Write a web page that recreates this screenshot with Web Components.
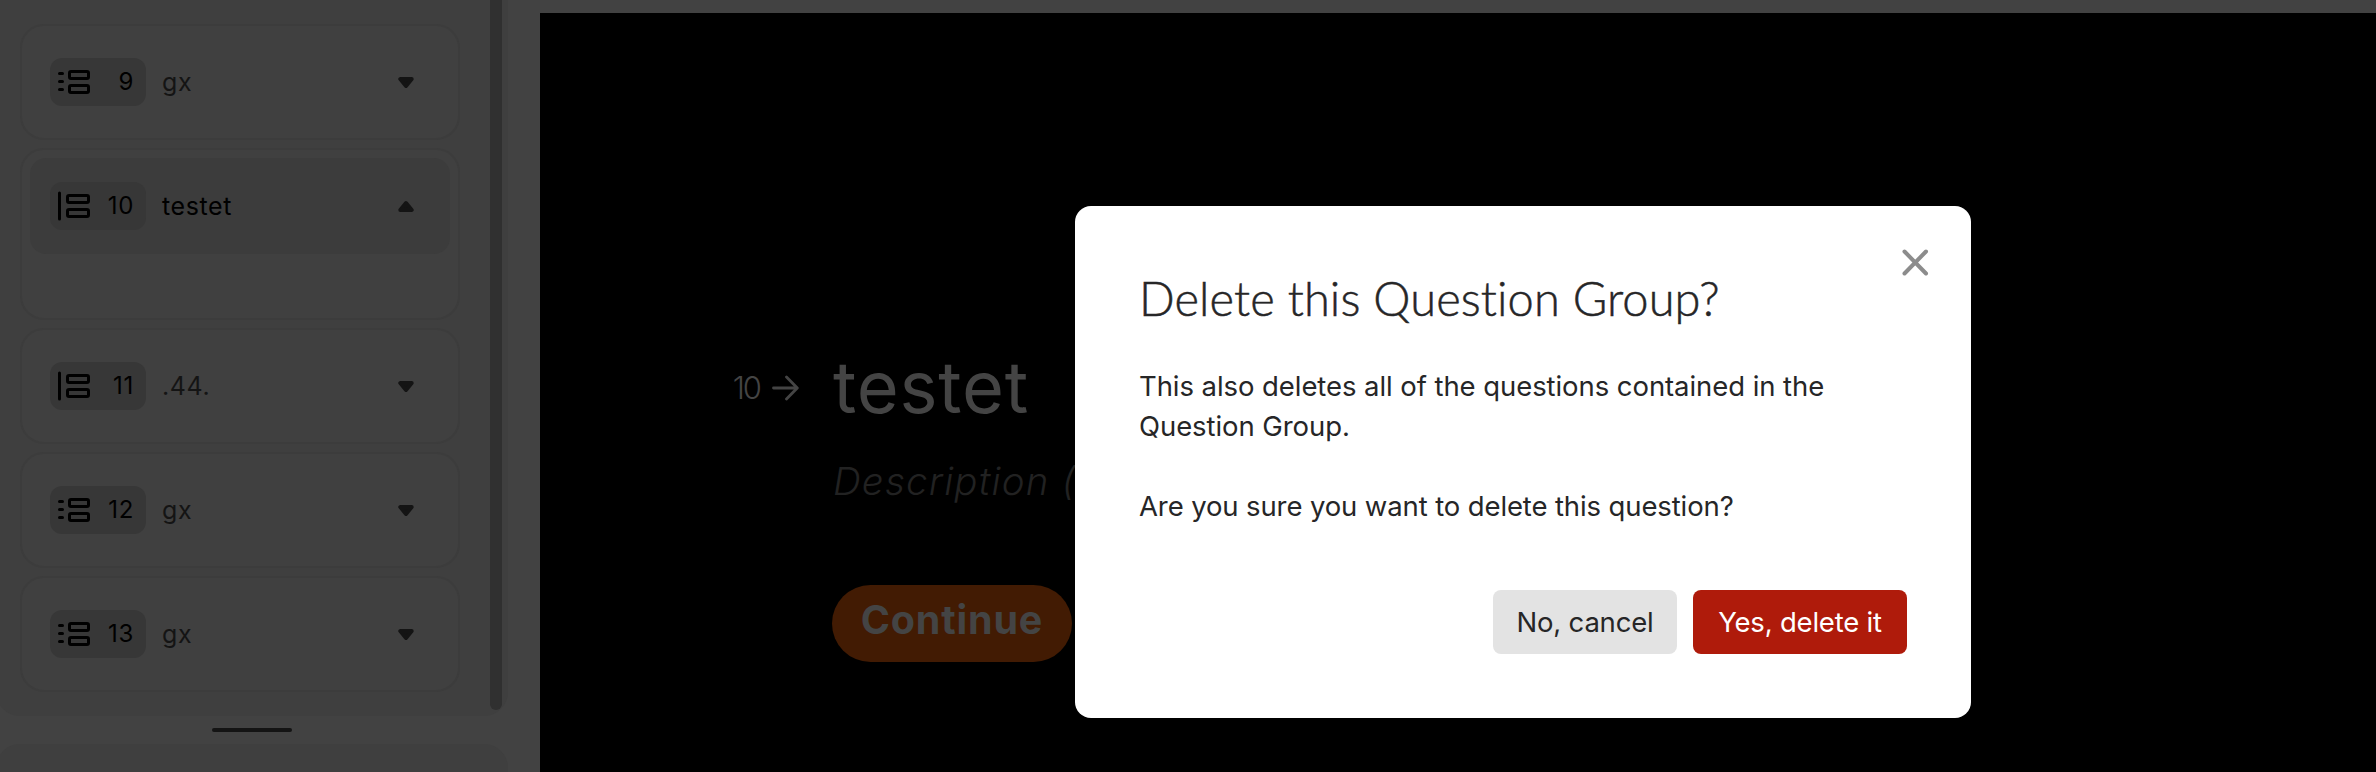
<!DOCTYPE html>
<html lang="en">
<head>
<meta charset="utf-8">
<title>Form editor</title>
<style>
html,body{margin:0;height:100%;overflow:hidden;background:#424242}
body{font-family:Inter,"Liberation Sans",sans-serif}
</style>
</head>
<body>
<form-editor>
  <question-panel slot="side">
    <question-card number="9" kind="dots">gx</question-card>
    <question-card number="10" kind="bar" open>testet</question-card>
    <question-card number="11" kind="bar">.44.</question-card>
    <question-card number="12" kind="dots">gx</question-card>
    <question-card number="13" kind="dots">gx</question-card>
  </question-panel>
  <question-preview slot="main" number="10">
    testet
    <span slot="description">Description (optional)</span>
    <span slot="action">Continue</span>
  </question-preview>
</form-editor>
<confirm-dialog>
  <span slot="title">Delete this Question Group?</span>
  <span slot="body">This also deletes all of the questions contained in the<br>Question Group.</span>
  <span slot="confirm">Are you sure you want to delete this question?</span>
  <dialog-button slot="actions" style="--w:184px;--fg:#262627;--bg:#e3e3e3">No, cancel</dialog-button>
  <dialog-button slot="actions" style="--w:214px;--fg:#fff;--bg:#af1b0b">Yes, delete it</dialog-button>
</confirm-dialog>
<script>
const define = (name, html, init) => customElements.define(name, class extends HTMLElement {
  constructor() {
    super();
    this.attachShadow({mode: 'open'}).innerHTML = html;
  }
  connectedCallback() { if (init) init(this, this.shadowRoot); }
});

define('form-editor', `
<style>
:host{display:grid;grid-template-columns:540px 1fr;height:772px;overflow:hidden}
.main{margin-top:13px;background:#000}
</style>
<slot name="side"></slot><div class="main"><slot name="main"></slot></div>`);

define('question-panel', `
<style>
:host{display:flex;flex-direction:column;height:772px;overflow:hidden}
.list{box-sizing:border-box;width:512px;height:716px;flex:none;margin-left:-4px;padding:24px 6px 0 24px;display:flex;justify-content:space-between;background:#3f3f3f;border-radius:0 0 24px 24px}
.cards{display:flex;flex-direction:column;gap:8px;width:440px}
.scroll{width:12px;height:710px;margin-top:-24px;border-radius:0 0 6px 6px;background:#303030}
.handle{flex:none;width:80px;height:4px;margin:12px 0 12px 212px;border-radius:2px;background:#141414}
.next{flex:none;width:512px;height:60px;margin-left:-4px;border-radius:24px 24px 0 0;background:#3f3f3f}
</style>
<div class="list"><div class="cards"><slot></slot></div><div class="scroll"></div></div>
<div class="handle"></div><div class="next"></div>`);

const icons = {
  dots: `<g stroke-linecap="round" stroke-width="3"><path d="M5.5 15.5h3M5.5 23.5h3M5.5 31.5h3"/></g><rect x="15.5" y="13.5" width="19" height="7" rx="1.5"/><rect x="15.5" y="27.5" width="19" height="7" rx="1.5"/>`,
  bar: `<path d="M5.5 11v26" stroke-linecap="round"/><rect x="13.5" y="13.5" width="21" height="7" rx="1.5"/><rect x="13.5" y="27.5" width="21" height="7" rx="1.5"/>`
};
define('question-card', `
<style>
:host{display:block;box-sizing:border-box;height:116px;border:2px solid #3c3c3c;border-radius:24px;background:#404040;padding:8px;color:#141414}
:host([open]){height:172px;color:#000}
.head{box-sizing:border-box;height:96px;border-radius:16px;padding:0 36px 0 20px;display:flex;align-items:center}
:host([open]) .head{background:#3c3c3c}
.badge{box-sizing:border-box;width:96px;height:48px;border-radius:12px;background:#373737;color:#000;display:flex;align-items:center;justify-content:space-between;padding:0 12px 0 4px;font-size:24px;line-height:30px;letter-spacing:.7px;font-weight:400}
.badge svg{fill:none;stroke:#000;stroke-width:3}
.label{flex:1;margin-left:16px;font-size:25px;line-height:30px;letter-spacing:.6px}
.caret{fill:#141414;stroke:#141414;stroke-width:4;stroke-linejoin:round}
:host([open]) .caret{transform:rotate(180deg)}
</style>
<div class="head">
<div class="badge"><svg width="40" height="48" viewBox="0 0 40 48"></svg><span class="n"></span></div>
<div class="label"><slot></slot></div>
<svg class="caret" width="16" height="13" viewBox="0 0 16 13"><path d="M2.3 3H13.7L8 10z"/></svg>
</div>`, (el, root) => {
  root.querySelector('.badge svg').innerHTML = icons[el.getAttribute('kind')];
  root.querySelector('.n').textContent = el.getAttribute('number');
});

define('question-preview', `
<style>
:host{display:grid;grid-template-columns:292px 1fr;color:#444;padding-top:332px;white-space:nowrap}
.num{display:flex;justify-content:flex-end;align-items:center;height:62px;padding:12px 33px 0 0;font-size:31px;line-height:36px}
.num span{letter-spacing:-2px;margin-right:12px;font-weight:300}
.num svg{fill:none;stroke:#444;stroke-width:2.8;stroke-linecap:round;stroke-linejoin:round}
.q{font-size:72px;line-height:84px;letter-spacing:.8px;padding-left:1px}
.d{font-style:italic;font-weight:300;font-size:38.5px;line-height:56px;letter-spacing:1.2px;margin-top:24px;color:#222;padding-left:1px}
.b{box-sizing:border-box;width:240px;height:77px;margin-top:76px;padding-bottom:7px;border-radius:39px;background:#421b03;display:flex;align-items:center;justify-content:center;font-size:39.5px;font-weight:700;letter-spacing:.8px}
</style>
<div class="num"><span></span><svg width="27" height="26" viewBox="0 0 27 26"><path d="M1.5 13H25M14.5 2L25.3 13L14.5 24"/></svg></div>
<div><div class="q"><slot></slot></div><div class="d"><slot name="description"></slot></div><div class="b"><slot name="action"></slot></div></div>`, (el, root) => {
  root.querySelector('.num span').textContent = el.getAttribute('number');
});

define('dialog-button', `
<style>
:host{display:flex;align-items:center;justify-content:center;box-sizing:border-box;width:var(--w);height:64px;border-radius:8px;background:var(--bg);color:var(--fg);font-size:27.5px;letter-spacing:-.2px;white-space:nowrap}
</style>
<slot></slot>`);

define('confirm-dialog', `
<style>
:host{display:block;position:absolute;left:1075px;top:206px;box-sizing:border-box;width:896px;height:512px;padding:64px;border-radius:16px;background:#fff;color:#262627}
h1{margin:0 0 40px;font:300 47px/56px Lato,sans-serif;font-variant-ligatures:none;letter-spacing:.1px;-webkit-text-stroke:.5px #262627}
p{margin:0 0 40px;font-size:27.5px;line-height:40px;letter-spacing:-.07px;white-space:nowrap}
.ask{margin-bottom:64px;letter-spacing:-.12px}
.row{display:flex;justify-content:flex-end;gap:16px}
.x{position:absolute;right:41px;top:42px}
</style>
<h1><slot name="title"></slot></h1>
<p><slot name="body"></slot></p>
<p class="ask"><slot name="confirm"></slot></p>
<div class="row"><slot name="actions"></slot></div>
<svg class="x" width="30" height="30" viewBox="0 0 30 30"><path d="M4.5 3.5L26 25.5M26 3.5L4.5 25.5" fill="none" stroke="#8c8c8c" stroke-width="4" stroke-linecap="round"/></svg>`);
</script>
</body>
</html>
